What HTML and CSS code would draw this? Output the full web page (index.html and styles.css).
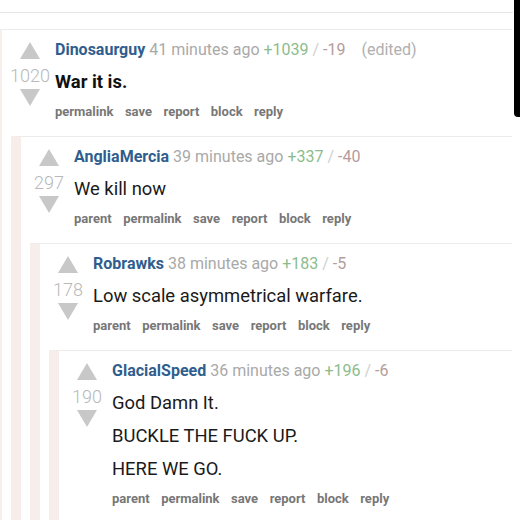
FILE: index.html
```html
<!DOCTYPE html>
<html lang="en">
<head>
  <meta charset="UTF-8">
  <title>comments</title>
  <link rel="stylesheet" href="styles.css">
</head>
<body>
  <div class="topbar"></div>
  <div class="edge"></div>

  <div class="thread">
    <div class="comment first">
      <div class="entry">
        <div class="votes">
          <div class="arrow up"></div>
          <div class="score">1020</div>
          <div class="arrow down"></div>
        </div>
        <div class="main">
          <div class="tagline">
            <span class="author">Dinosaurguy</span>
            <span class="time">41 minutes ago</span>
            <span class="plus">+1039</span> <span class="slash">/</span> <span class="minus">-19</span>
            <span class="edited">(edited)</span>
          </div>
          <div class="body bold"><p>War it is.</p></div>
          <ul class="buttons">
            <li>permalink</li><li>save</li><li>report</li><li>block</li><li>reply</li>
          </ul>
        </div>
      </div>

      <div class="comment">
        <div class="entry">
          <div class="votes">
            <div class="arrow up"></div>
            <div class="score">297</div>
            <div class="arrow down"></div>
          </div>
          <div class="main">
            <div class="tagline">
              <span class="author">AngliaMercia</span>
              <span class="time">39 minutes ago</span>
              <span class="plus">+337</span> <span class="slash">/</span> <span class="minus">-40</span>
            </div>
            <div class="body"><p>We kill now</p></div>
            <ul class="buttons">
              <li>parent</li><li>permalink</li><li>save</li><li>report</li><li>block</li><li>reply</li>
            </ul>
          </div>
        </div>

        <div class="comment">
          <div class="entry">
            <div class="votes">
              <div class="arrow up"></div>
              <div class="score">178</div>
              <div class="arrow down"></div>
            </div>
            <div class="main">
              <div class="tagline">
                <span class="author">Robrawks</span>
                <span class="time">38 minutes ago</span>
                <span class="plus">+183</span> <span class="slash">/</span> <span class="minus">-5</span>
              </div>
              <div class="body"><p>Low scale asymmetrical warfare.</p></div>
              <ul class="buttons">
                <li>parent</li><li>permalink</li><li>save</li><li>report</li><li>block</li><li>reply</li>
              </ul>
            </div>
          </div>

          <div class="comment">
            <div class="entry">
              <div class="votes">
                <div class="arrow up"></div>
                <div class="score">190</div>
                <div class="arrow down"></div>
              </div>
              <div class="main">
                <div class="tagline">
                  <span class="author">GlacialSpeed</span>
                  <span class="time">36 minutes ago</span>
                  <span class="plus">+196</span> <span class="slash">/</span> <span class="minus">-6</span>
                </div>
                <div class="body">
                  <p>God Damn It.</p>
                  <p>BUCKLE THE FUCK UP.</p>
                  <p>HERE WE GO.</p>
                </div>
                <ul class="buttons">
                  <li>parent</li><li>permalink</li><li>save</li><li>report</li><li>block</li><li>reply</li>
                </ul>
              </div>
            </div>
          </div>
        </div>
      </div>
    </div>
  </div>
</body>
</html>
```

FILE: styles.css
```css
body {
  margin: 0;
  background: #fff;
  font-family: Roboto, "Liberation Sans", sans-serif;
  color: #222;
  overflow: hidden;
}
.topbar {
  height: 12px;
  border-bottom: 1px solid #e6e6e6;
  margin-right: 7px;
  margin-bottom: 16px;
}
/* phone edge on the right */
.edge {
  position: absolute;
  top: 0;
  right: 0;
  width: 6px;
  height: 117px;
  background: #000;
  border-bottom-left-radius: 4px;
}
.thread {
  margin-right: 8px;
}
.comment {
  border-top: 1px solid #ececec;
  border-left: 10px solid #f7edea;
  margin-left: 9px;
}
.comment.first {
  margin-left: 0;
  border-left: 2px solid #f8eeec;
}
.entry {
  display: flex;
  padding: 10px 0 15px;
}
.votes {
  flex: 0 0 48px;
  margin-left: 4px;
  margin-right: 1px;
  display: flex;
  flex-direction: column;
  align-items: center;
  padding-top: 2px;
}
.arrow {
  width: 0;
  height: 0;
  border-left: 10.5px solid transparent;
  border-right: 10.5px solid transparent;
}
.arrow.up {
  border-bottom: 17px solid #c8c8c8;
}
.arrow.down {
  border-top: 17px solid #c8c8c8;
  margin-top: 1px;
}
.score {
  font-size: 18px;
  font-weight: 300;
  color: #b8b8b8;
  line-height: 24px;
  margin-top: 5px;
}
.main {
  flex: 1;
}
.tagline {
  font-size: 16px;
  line-height: 20px;
  color: #a9a9a9;
  white-space: nowrap;
}
.author {
  font-weight: bold;
  color: #2f5e8e;
}
.plus {
  color: #8cbc8c;
}
.slash {
  color: #cfcfcf;
}
.minus {
  color: #b49c9c;
}
.edited {
  margin-left: 12px;
  color: #b0b0b0;
}
.body {
  font-size: 18.4px;
  color: #1a1a1a;
}
.body p {
  margin: 11px 0 0;
  line-height: 22px;
}
.body.bold {
  font-weight: bold;
  color: #111;
}
.buttons {
  list-style: none;
  margin: 10px 0 0;
  padding: 0;
  display: flex;
  gap: 11.5px;
  font-size: 13px;
  font-weight: bold;
  line-height: 18px;
  color: #777;
}
```
